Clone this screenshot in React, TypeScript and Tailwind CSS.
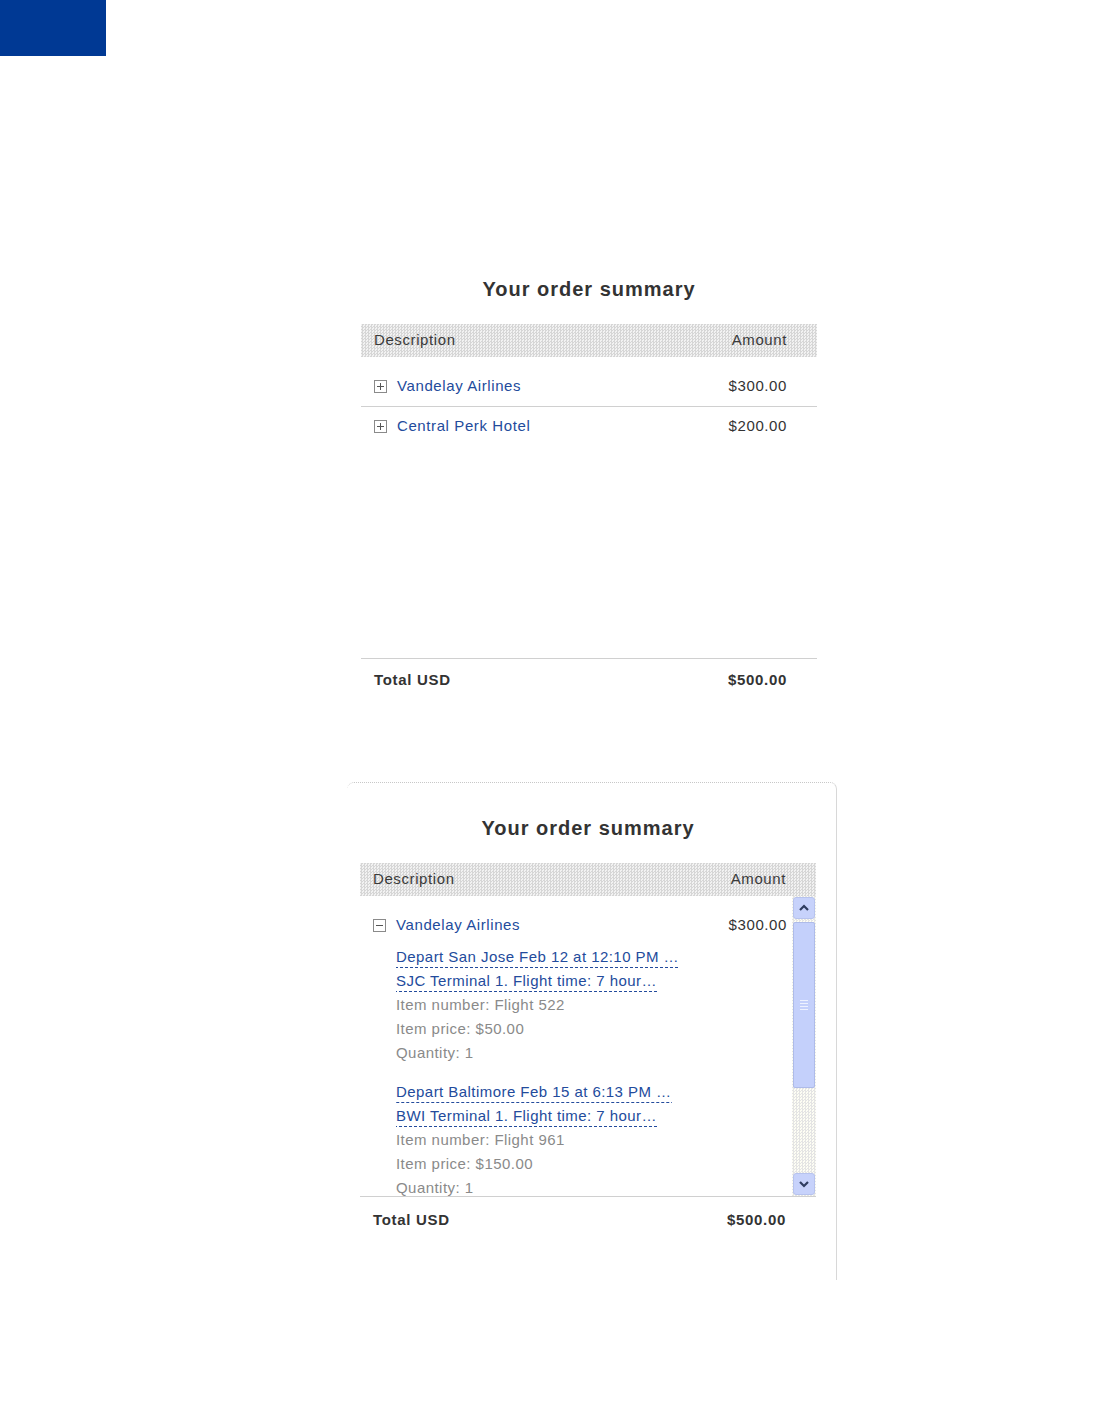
import React from 'react'

const font = { fontFamily: '"Liberation Sans", Arial, sans-serif' }

function Toggle({ open }: { open?: boolean }) {
  return (
    <span className="inline-flex w-[13px] h-[13px] items-center justify-center border border-[#8a8a8a] bg-white shrink-0">
      <svg width="9" height="9" viewBox="0 0 9 9">
        <path d="M1 4.5h7" stroke="#555" strokeWidth="1" />
        {!open && <path d="M4.5 1v7" stroke="#555" strokeWidth="1" />}
      </svg>
    </span>
  )
}

function HeaderRow() {
  return (
    <div className="flex items-center justify-between h-[33px] pl-[13px] pr-[30px] text-[15px] tracking-[0.6px] text-[#3a3a3a] bg-[repeating-conic-gradient(#d6d6d6_0_25%,#f2f2f2_0_50%)] bg-[length:3px_3px]">
      <span>Description</span>
      <span>Amount</span>
    </div>
  )
}

function ItemRow({ name, amount, open }: { name: string; amount: string; open?: boolean }) {
  return (
    <div className="flex items-center justify-between h-[22px] tracking-[0.6px]">
      <div className="flex items-center gap-[10px]">
        <Toggle open={open} />
        <span className="text-[#234b9c]">{name}</span>
      </div>
      <span className="text-[#333]">{amount}</span>
    </div>
  )
}

function TotalRow({ top = 'pt-[10px]' }: { top?: string }) {
  return (
    <div className={`flex items-center justify-between pl-[13px] pr-[30px] ${top} text-[15px] font-bold tracking-[0.7px] text-[#333]`}>
      <span>Total USD</span>
      <span>$500.00</span>
    </div>
  )
}

type Flight = { depart: string; terminal: string; number: string; price: string }

const flights: Flight[] = [
  { depart: 'Depart San Jose Feb 12 at 12:10 PM …', terminal: 'SJC Terminal 1. Flight time: 7 hour…', number: 'Flight 522', price: '$50.00' },
  { depart: 'Depart Baltimore Feb 15 at 6:13 PM …', terminal: 'BWI Terminal 1. Flight time: 7 hour…', number: 'Flight 961', price: '$150.00' },
]

// dashed underline drawn as a repeating gradient so the dashes are longer than the browser default
const dashed =
  'text-[#234b9c] leading-[20px] mt-[2px] mb-[1px] pb-[1px] bg-[linear-gradient(to_right,#234b9c_60%,transparent_0)] bg-[length:5px_1px] bg-repeat-x bg-bottom'

function FlightDetail({ f }: { f: Flight }) {
  return (
    <div className="flex flex-col items-start leading-[24px] tracking-[0.45px]">
      <span className={dashed}>{f.depart}</span>
      <span className={dashed}>{f.terminal}</span>
      <span className="text-[#8a8a8a]">Item number: {f.number}</span>
      <span className="text-[#8a8a8a]">Item price: {f.price}</span>
      <span className="text-[#8a8a8a]">Quantity: 1</span>
    </div>
  )
}

function Scrollbar() {
  return (
    <div className="w-[24px] h-full flex flex-col bg-[repeating-conic-gradient(#e4e4e4_0_25%,#fdfdf4_0_50%)] bg-[length:3px_3px] py-[1px]">
      <div className="h-[22px] mx-[1px] rounded-[3px] border border-[#b7c3ee] bg-[#c7d2fb] flex items-center justify-center">
        <svg width="12" height="8" viewBox="0 0 12 8">
          <path d="M2 6l4-4 4 4" fill="none" stroke="#2f3d60" strokeWidth="2.2" />
        </svg>
      </div>
      <div className="h-[166px] mt-[3px] mx-[1px] rounded-[2px] border border-[#aebbe9] bg-[#c4d0fb] flex items-center justify-center">
        <div className="flex flex-col gap-[2px]">
          <div className="w-[8px] h-[1px] bg-[#eef2ff]" />
          <div className="w-[8px] h-[1px] bg-[#eef2ff]" />
          <div className="w-[8px] h-[1px] bg-[#eef2ff]" />
          <div className="w-[8px] h-[1px] bg-[#eef2ff]" />
        </div>
      </div>
      <div className="flex-1" />
      <div className="h-[22px] mx-[1px] rounded-[3px] border border-[#b7c3ee] bg-[#c7d2fb] flex items-center justify-center">
        <svg width="12" height="8" viewBox="0 0 12 8">
          <path d="M2 2l4 4 4-4" fill="none" stroke="#2f3d60" strokeWidth="2.2" />
        </svg>
      </div>
    </div>
  )
}

export default function App() {
  return (
    <div className="w-[1114px] min-h-[1414px] bg-white" style={font}>
      <div className="w-[106px] h-[56px] bg-[#003994]" />

      {/* collapsed summary */}
      <section className="ml-[361px] w-[456px] mt-[219px]">
        <h2 className="text-[20px] leading-[28px] font-bold tracking-[1px] text-[#333] text-center">Your order summary</h2>
        <div className="mt-[21px]">
          <HeaderRow />
        </div>
        <div className="h-[301px] text-[15px]">
          <div className="pt-[18px] pb-[9px] pl-[13px] pr-[30px] border-b border-[#d0d0d0]">
            <ItemRow name="Vandelay Airlines" amount="$300.00" />
          </div>
          <div className="pt-[8px] pl-[13px] pr-[30px]">
            <ItemRow name="Central Perk Hotel" amount="$200.00" />
          </div>
        </div>
        <div className="border-t border-[#d0d0d0]">
          <TotalRow />
        </div>
      </section>

      {/* expanded summary with scroll */}
      <section className="ml-[347px] w-[490px] h-[498px] mt-[90px] border-t border-r border-solid [border-top-style:dotted] border-t-[#c8c8c8] border-r-[#d8d8d8] rounded-t-[7px] pt-[31px] pl-[13px] pr-[20px]">
        <h2 className="text-[20px] leading-[28px] font-bold tracking-[1px] text-[#333] text-center">Your order summary</h2>
        <div className="mt-[21px]">
          <HeaderRow />
        </div>
        <div className="h-[300px] flex text-[15px] overflow-hidden">
          <div className="flex-1 pt-[19px] pl-[13px] pr-[5px] overflow-hidden">
            <ItemRow name="Vandelay Airlines" amount="$300.00" open />
            <div className="pl-[23px] mt-[8px] flex flex-col gap-[15px]">
              {flights.map((f) => (
                <FlightDetail key={f.number} f={f} />
              ))}
            </div>
          </div>
          <Scrollbar />
        </div>
        <div className="border-t border-[#d0d0d0]">
          <TotalRow top="pt-[12px]" />
        </div>
      </section>
    </div>
  )
}
